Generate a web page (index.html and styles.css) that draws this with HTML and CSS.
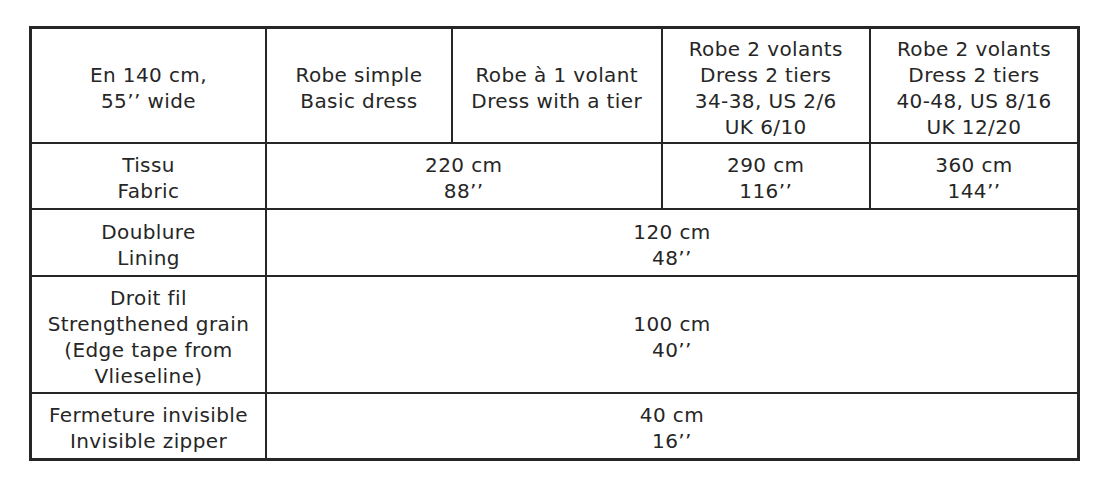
FILE: index.html
```html
<!DOCTYPE html>
<html lang="fr">
<head>
<meta charset="utf-8">
<title>Métrage</title>
<link rel="stylesheet" href="styles.css">
</head>
<body>
<table class="yardage">
  <colgroup>
    <col class="c1"><col class="c2"><col class="c3"><col class="c4"><col class="c5">
  </colgroup>
  <tr class="r-head">
    <td>En 140 cm,<br>55’’ wide</td>
    <td>Robe simple<br>Basic dress</td>
    <td>Robe à 1 volant<br>Dress with a tier</td>
    <td>Robe 2 volants<br>Dress 2 tiers<br>34-38, US 2/6<br>UK 6/10</td>
    <td>Robe 2 volants<br>Dress 2 tiers<br>40-48, US 8/16<br>UK 12/20</td>
  </tr>
  <tr class="r-fabric">
    <td>Tissu<br>Fabric</td>
    <td colspan="2">220 cm<br>88’’</td>
    <td>290 cm<br>116’’</td>
    <td>360 cm<br>144’’</td>
  </tr>
  <tr class="r-lining">
    <td>Doublure<br>Lining</td>
    <td colspan="4">120 cm<br>48’’</td>
  </tr>
  <tr class="r-grain">
    <td>Droit fil<br>Strengthened grain<br>(Edge tape from<br>Vlieseline)</td>
    <td colspan="4">100 cm<br>40’’</td>
  </tr>
  <tr class="r-zip">
    <td>Fermeture invisible<br>Invisible zipper</td>
    <td colspan="4">40 cm<br>16’’</td>
  </tr>
</table>
</body>
</html>
```

FILE: styles.css
```css
html, body {
  margin: 0;
  padding: 0;
  background: #ffffff;
}

body {
  padding: 26px 0 0 29px;
  font-family: "DejaVu Sans", "Liberation Sans", sans-serif;
  color: #262626;
}

.yardage {
  border-collapse: collapse;
  table-layout: fixed;
  width: 1051px;
  border: 3px solid #262626;
}

.yardage .c1 { width: 235.5px; }
.yardage .c2 { width: 186px; }
.yardage .c3 { width: 209.5px; }
.yardage .c4 { width: 208.5px; }
.yardage .c5 { width: 208.5px; }

.yardage td {
  border: 2px solid #262626;
  padding: 4px 0 0;
  text-align: center;
  vertical-align: middle;
  font-size: 20px;
  line-height: 26px;
  letter-spacing: 0.4px;
  white-space: nowrap;
}

.r-head td { height: 109px; }
.r-fabric td { height: 60px; }
.r-lining td { height: 61px; }
.r-grain td { height: 111px; }
.r-zip td { height: 60px; }
```
